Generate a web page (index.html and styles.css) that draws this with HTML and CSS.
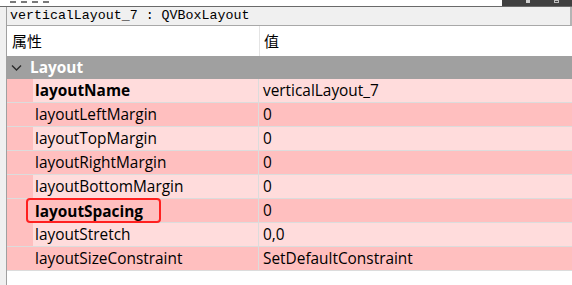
FILE: index.html
```html
<!DOCTYPE html>
<html lang="zh">
<head>
    <meta charset="UTF-8">
    <title>Property Editor</title>
    <link rel="stylesheet" href="styles.css">
</head>
<body>
    <div class="topbar">
        <div class="search"><span class="dash"></span><span class="dash"></span><span class="dash"></span><span class="dash"></span></div>
        <div class="tools"><span class="tool-a"></span><span class="tool-b"></span></div>
    </div>

    <div class="panel">
        <div class="gutter"></div>
        <div class="main">
            <div class="object-label">verticalLayout_7 : QVBoxLayout</div>

            <div class="header">
                <div class="head-cell">属性</div>
                <div class="head-cell value">值</div>
            </div>

            <div class="group">
                <svg class="chevron" width="11" height="8" viewBox="0 0 11 8">
                    <path d="M1 1.5 L5.5 6 L10 1.5" fill="none" stroke="#2b2b2b" stroke-width="1.4"/>
                </svg>
                <span>Layout</span>
            </div>

            <div class="row light">
                <div class="indent"></div>
                <div class="name bold">layoutName</div>
                <div class="val">verticalLayout_7</div>
            </div>
            <div class="row dark">
                <div class="indent"></div>
                <div class="name">layoutLeftMargin</div>
                <div class="val">0</div>
            </div>
            <div class="row light">
                <div class="indent"></div>
                <div class="name">layoutTopMargin</div>
                <div class="val">0</div>
            </div>
            <div class="row dark">
                <div class="indent"></div>
                <div class="name">layoutRightMargin</div>
                <div class="val">0</div>
            </div>
            <div class="row light">
                <div class="indent"></div>
                <div class="name">layoutBottomMargin</div>
                <div class="val">0</div>
            </div>
            <div class="row dark">
                <div class="indent"></div>
                <div class="name bold"><span class="highlight">layoutSpacing</span></div>
                <div class="val">0</div>
            </div>
            <div class="row light">
                <div class="indent"></div>
                <div class="name">layoutStretch</div>
                <div class="val">0,0</div>
            </div>
            <div class="row dark">
                <div class="indent"></div>
                <div class="name">layoutSizeConstraint</div>
                <div class="val">SetDefaultConstraint</div>
            </div>
        </div>
    </div>
</body>
</html>
```

FILE: styles.css
```css
* {
    margin: 0;
    padding: 0;
    box-sizing: border-box;
}

body {
    width: 572px;
    height: 285px;
    overflow: hidden;
    background: #ffffff;
    font-family: "Open Sans", "Noto Sans CJK SC", sans-serif;
    font-size: 15.4px;
    color: #000;
}

.topbar {
    display: flex;
    height: 7px;
    border-bottom: 1px solid #6a6a6a;
}

.search {
    flex: 1;
    background: #fff;
    display: flex;
    gap: 5px;
    padding-left: 10px;
}

.dash {
    width: 6px;
    height: 2px;
    margin-top: 1px;
    background: #7a7a7a;
}

.tools {
    width: 70px;
    background: #404040;
    position: relative;
}

.tool-a {
    position: absolute;
    left: 24px;
    top: 0;
    width: 4px;
    height: 3px;
    background: #cfcfcf;
}

.tool-b {
    position: absolute;
    left: 52px;
    top: 0;
    width: 5px;
    height: 3px;
    border: 1px solid #bdbdbd;
}

.panel {
    display: flex;
    height: 278px;
}

.gutter {
    width: 6px;
    background: #f0f0f0;
}

.main {
    flex: 1;
    border-left: 1px solid #a0a0a0;
}

.object-label {
    height: 19px;
    padding-left: 3px;
    background: #f0f0f0;
    border-bottom: 1px solid #a8a8a8;
    border-right: 2px solid #b4b4b4;
    font-family: "Liberation Mono", monospace;
    font-size: 13.3px;
    line-height: 18px;
    color: #000;
}

.header {
    display: grid;
    grid-template-columns: 252px 1fr;
    height: 30px;
    background: #fff;
    font-size: 15px;
}

.head-cell {
    padding-left: 5px;
    line-height: 30px;
    color: #000;
}

.head-cell.value {
    border-left: 1px solid #e4e4e4;
    padding-left: 4px;
}

.group {
    display: flex;
    align-items: center;
    height: 23px;
    background: #a0a0a0;
    color: #fff;
    font-weight: bold;
}

.chevron {
    margin-left: 4px;
    margin-right: 8px;
}

.row {
    display: grid;
    grid-template-columns: 26px 226px 1fr;
    height: 24px;
    border-bottom: 1px solid #dcdcdc;
}

.row.light {
    background: #ffdcdc;
}

.row.dark {
    background: #ffbfbf;
}

.indent {
    background: #ffbfbf;
}

.name {
    padding-left: 2px;
    line-height: 23px;
    border-right: 1px solid #dcdcdc;
}

.bold {
    font-weight: bold;
}

.val {
    padding-left: 4px;
    line-height: 23px;
}

.highlight {
    display: inline-block;
    margin-left: -9px;
    padding: 0 16px 0 7px;
    height: 25px;
    margin-top: -1px;
    line-height: 23px;
    border: 2.5px solid #ff2020;
    border-radius: 4px;
}
```
